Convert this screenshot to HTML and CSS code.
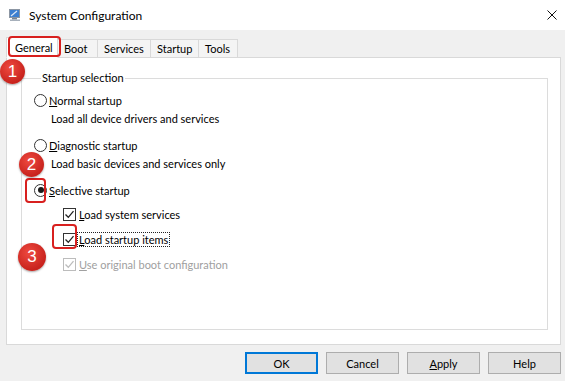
FILE: index.html
```html
<!DOCTYPE html>
<html lang="en">

<head>
  <meta charset="UTF-8" />
  <meta name="viewport" content="width=device-width, initial-scale=1.0" />
  <title>System Configuration</title>
  <link rel="stylesheet" href="styles.css">
</head>

<body>
  <div class="window">
    <div class="titlebar">
      <svg class="app-icon" width="14" height="14" viewBox="0 0 14 14">
        <rect x="1" y="1" width="11" height="9" fill="#8c96a3" />
        <rect x="2" y="2" width="9" height="7" fill="#3d7fd0" />
        <path d="M3 8 L9 3" stroke="#dfe8f4" stroke-width="1.2" />
        <rect x="4" y="10" width="5" height="1.5" fill="#7a8593" />
        <rect x="2" y="11.5" width="10" height="1.5" fill="#a7b0bb" />
      </svg>
      <span class="title">System Configuration</span>
      <svg class="close" width="10" height="10" viewBox="0 0 10 10">
        <path d="M0.5 0.5 L9.5 9.5 M9.5 0.5 L0.5 9.5" stroke="#111" stroke-width="1" />
      </svg>
    </div>

    <div class="client">
      <div class="tabs">
        <div class="tab active">General</div>
        <div class="tab">Boot</div>
        <div class="tab">Services</div>
        <div class="tab">Startup</div>
        <div class="tab">Tools</div>
      </div>

      <div class="panel">
        <fieldset class="group">
          <legend>Startup selection</legend>

          <div class="row">
            <span class="radio"></span>
            <span><u>N</u>ormal startup</span>
          </div>
          <div class="row desc">Load all device drivers and services</div>

          <div class="row opt">
            <span class="radio"></span>
            <span><u>D</u>iagnostic startup</span>
          </div>
          <div class="row desc">Load basic devices and services only</div>

          <div class="row opt">
            <span class="radio checked"></span>
            <span><u>S</u>elective startup</span>
          </div>

          <div class="row check first">
            <span class="box"><svg width="11" height="11" viewBox="0 0 11 11"><path d="M1.5 5.5 L4.3 8.3 L9.5 2.2" fill="none" stroke="#222" stroke-width="1.3" /></svg></span>
            <span><u>L</u>oad system services</span>
          </div>
          <div class="row check">
            <span class="box"><svg width="11" height="11" viewBox="0 0 11 11"><path d="M1.5 5.5 L4.3 8.3 L9.5 2.2" fill="none" stroke="#222" stroke-width="1.3" /></svg></span>
            <span class="focus"><u>L</u>oad startup items</span>
          </div>
          <div class="row check disabled">
            <span class="box"><svg width="11" height="11" viewBox="0 0 11 11"><path d="M1.5 5.5 L4.3 8.3 L9.5 2.2" fill="none" stroke="#bcbcbc" stroke-width="1.3" /></svg></span>
            <span><u>U</u>se original boot configuration</span>
          </div>
        </fieldset>
      </div>

      <div class="buttons">
        <button class="btn default">OK</button>
        <button class="btn">Cancel</button>
        <button class="btn"><u>A</u>pply</button>
        <button class="btn">Help</button>
      </div>
    </div>

    <!-- annotations -->
    <div class="hl hl-tab"></div>
    <div class="hl hl-radio"></div>
    <div class="hl hl-check"></div>
    <div class="mark mark-1">1</div>
    <div class="mark mark-2">2</div>
    <div class="mark mark-3">3</div>
  </div>
</body>

</html>
```

FILE: styles.css
```css
* {
  box-sizing: border-box;
}

body {
  margin: 0;
  font-family: Lato, "Noto Sans", sans-serif;
  font-size: 11px;
  color: #000;
  background: #f0f0f0;
}

.window {
  position: relative;
  width: 565px;
  height: 381px;
  overflow: hidden;
  background: #f0f0f0;
}

.titlebar {
  display: flex;
  align-items: center;
  height: 30px;
  padding: 0 8px 0 8px;
  background: #fff;
}

.app-icon {
  margin-right: 7px;
}

.title {
  flex: 1;
  font-size: 12px;
}

.tabs {
  display: flex;
  align-items: flex-end;
  height: 21px;
  margin-bottom: -1px;
  position: relative;
  z-index: 1;
}

.client {
  padding: 7px 4px 0 6px;
}

.tab {
  height: 19px;
  line-height: 17px;
  padding: 0 6px;
  border: 1px solid #d9d9d9;
  border-left: none;
  background: #f4f4f4;
}

.tab.active {
  height: 21px;
  line-height: 19px;
  padding: 0 5px 0 8px;
  border-left: 1px solid #d9d9d9;
  border-bottom-color: #fff;
  background: #fff;
}

.tab:nth-child(2) { width: 40px; }
.tab:nth-child(3) { width: 53px; }
.tab:nth-child(4) { width: 48px; }
.tab:nth-child(5) { width: 39px; }
.tab.active { width: 52px; }

.panel {
  display: flex;
  height: 288px;
  padding: 12px 12px 14px 14px;
  border: 1px solid #d9d9d9;
  background: #fff;
}

.group {
  flex: 1;
  margin: 0;
  padding: 5px 0 0 12px;
  border: 1px solid #dcdcdc;
}

.group legend {
  margin-left: 7px;
  padding: 0 1px;
  line-height: 16px;
}

.row {
  display: flex;
  align-items: center;
  height: 18px;
  gap: 2px;
  white-space: nowrap;
}

.desc {
  padding-left: 17px;
}

.opt {
  margin-top: 9px;
}

.radio {
  width: 13px;
  height: 13px;
  border: 1px solid #333;
  border-radius: 50%;
  background: #fff;
  display: flex;
  align-items: center;
  justify-content: center;
}

.radio.checked::after {
  content: "";
  width: 6px;
  height: 6px;
  border-radius: 50%;
  background: #1a1a1a;
}

.check {
  margin-top: 7px;
  padding-left: 29px;
  gap: 3px;
}

.check.first {
  margin-top: 6px;
}

.box {
  width: 13px;
  height: 13px;
  border: 1px solid #333;
  background: #fff;
  display: flex;
  align-items: center;
  justify-content: center;
}

.disabled .box {
  border-color: #bcbcbc;
}

.disabled {
  color: #a0a0a0;
}

.focus {
  outline: 1px dotted #222;
  outline-offset: 0;
  padding: 0 1px;
  margin-left: -1px;
}

.buttons {
  display: flex;
  justify-content: flex-end;
  gap: 8px;
  margin-top: 7px;
}

.btn {
  width: 73px;
  height: 22px;
  padding: 0;
  font: inherit;
  color: #000;
  border: 1px solid #adadad;
  background: #e1e1e1;
}

.btn.default {
  border: 2px solid #0078d7;
}

.hl {
  position: absolute;
  border: 2px solid #d8201f;
  border-radius: 4px;
  z-index: 2;
}

.hl-tab {
  left: 8px;
  top: 36px;
  width: 53px;
  height: 21px;
}

.hl-radio {
  left: 25px;
  top: 178px;
  width: 21px;
  height: 25px;
}

.hl-check {
  left: 52px;
  top: 224px;
  width: 25px;
  height: 25px;
}

.mark {
  position: absolute;
  z-index: 3;
  width: 25px;
  height: 25px;
  border-radius: 50%;
  background: radial-gradient(circle at 40% 35%, #ef4a40, #c8231d 70%);
  box-shadow: 0 1px 2px rgba(0, 0, 0, 0.35);
  color: #fff;
  font-family: "Liberation Sans", sans-serif;
  font-size: 17px;
  line-height: 25px;
  text-align: center;
}

.mark-1 {
  left: 0;
  top: 59px;
}

.mark-2 {
  left: 19px;
  top: 152px;
}

.mark-3 {
  left: 18px;
  top: 243px;
  width: 28px;
  height: 28px;
  line-height: 28px;
}
```
